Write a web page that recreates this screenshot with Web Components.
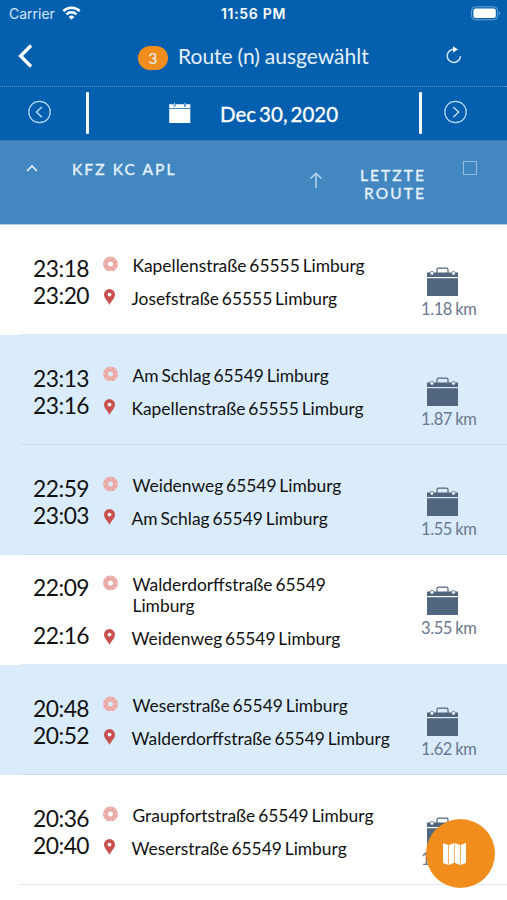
<!DOCTYPE html>
<html lang="de">
<head>
<meta charset="utf-8">
<title>Route (n) ausgewählt</title>
<style>
  body {
    margin: 0;
    background: #fff;
    font-family: Lato, "Open Sans", sans-serif;
  }
</style>
</head>
<body>
<route-app></route-app>

<script>
class StatusBar extends HTMLElement {
  constructor () {
    super()
    this.shadow = this.attachShadow({ mode: 'open' })
  }

  connectedCallback () {
    this.shadow.innerHTML =
    /*html*/`
    <style>
      :host {
        display: grid;
        grid-template-columns: 1fr auto 1fr;
        align-items: center;
        height: 28px;
        padding: 0 6px 0 9px;
        box-sizing: border-box;
        color: #fff;
        font-family: Inter, sans-serif;
        font-size: 14px;
      }
      .carrier { display: flex; align-items: center; gap: 7px; color: #d5e8f8; margin-top: -1px; }
      .carrier svg { margin-top: -1px; }
      .time { font-weight: 600; font-size: 14px; letter-spacing: 0.7px; margin-right: 3px; margin-top: -1px; }
      .battery { justify-self: end; margin-top: -2px; }
      svg { display: block; }
    </style>
    <div class="carrier">
      <span>Carrier</span>
      <svg width="19" height="14" viewBox="0 0 19 14" fill="none" stroke="#fff" stroke-width="2.5">
        <path d="M1.3 5.2a11.6 11.6 0 0 1 16.4 0M4.5 8.4a7.1 7.1 0 0 1 10 0"/>
        <path d="M9.5 13.8l-2.8-2.9a4 4 0 0 1 5.6 0z" fill="#fff" stroke="none"/>
      </svg>
    </div>
    <div class="time">11:56 PM</div>
    <svg class="battery" width="30" height="15" viewBox="0 0 30 15">
      <rect x=".6" y=".8" width="26" height="13" rx="3.8" fill="none" stroke="#6ea5d8"/>
      <rect x="2.4" y="2.6" width="22.4" height="9.4" rx="2" fill="#fff"/>
      <path d="M28 5.3q2.2 2 0 4z" fill="#6ea5d8"/>
    </svg>
    `
  }
}

class RouteHeader extends HTMLElement {
  constructor () {
    super()
    this.shadow = this.attachShadow({ mode: 'open' })
  }

  connectedCallback () {
    this.shadow.innerHTML =
    /*html*/`
    <style>
      :host {
        display: flex;
        align-items: center;
        height: 59px;
        box-sizing: border-box;
        padding: 0 43px 0 18px;
        border-bottom: 1px dotted #5c97cd;
        color: #e3f0fb;
      }
      .title { flex: 1; display: flex; align-items: center; margin-left: 105px; }
      .count {
        width: 30px;
        height: 24px;
        margin-top: 1px;
        margin-right: 10px;
        border-radius: 12px;
        background: #f08d1d;
        font-size: 16px;
        line-height: 23px;
        text-align: center;
      }
      .text { font-size: 21px; line-height: 28px; margin-top: -3px; word-spacing: -0.5px; }
      svg { display: block; }
      .back { margin-top: -2px; }
      .refresh { margin-top: -5px; }
    </style>
    <svg class="back" width="15" height="24" viewBox="0 0 15 24" fill="none" stroke="#fff" stroke-width="3.4">
      <path d="M13 1.5L2.6 12 13 22.5"/>
    </svg>
    <div class="title">
      <span class="count">${this.getAttribute('count')}</span>
      <span class="text"><slot></slot></span>
    </div>
    <svg class="refresh" width="20" height="20" viewBox="0 0 20 20" fill="none" stroke="#d5e8f8" stroke-width="1.4">
      <path d="M9.8 4.3A6.6 6.6 0 1 0 16.4 11"/>
      <path d="M9 1.2v6.4l5-3z" fill="#fff" stroke="none"/>
    </svg>
    `
  }
}

class DatePicker extends HTMLElement {
  constructor () {
    super()
    this.shadow = this.attachShadow({ mode: 'open' })
  }

  connectedCallback () {
    this.shadow.innerHTML =
    /*html*/`
    <style>
      :host {
        display: flex;
        align-items: center;
        height: 53px;
        box-sizing: border-box;
        padding: 0 39px 0 27px;
        color: #fff;
      }
      svg { display: block; }
      .bar { width: 3px; height: 42px; margin-top: -1px; border-radius: 1px; background: #f2f8fd; }
      .arrow { margin-top: -3px; }
      .day { flex: 1; display: flex; align-items: center; padding-left: 80px; }
      .day svg { margin-top: -2px; }
      .date { margin-left: 29px; margin-top: 1px; font-size: 20.5px; line-height: 26px; word-spacing: -2.2px; -webkit-text-stroke: 0.3px #fff; }
    </style>
    <svg class="arrow" width="24" height="24" viewBox="0 0 24 24" fill="none" stroke="#b9d9f2" stroke-width="1.2">
      <circle cx="12.5" cy="12" r="10.7"/><path d="M15 7l-5.5 5 5.5 5.2" stroke-width="1.5"/>
    </svg>
    <div class="bar" style="margin-left: 35px"></div>
    <div class="day">
      <svg width="22" height="22" viewBox="0 0 22 22" fill="#fff">
        <path d="M.2 2.2h4.5v2.3h1.8V2.2h8.6v2.3h1.8V2.2h4.4v4H.2z"/>
        <path d="M5 .8h1v3H5zM15.5.8h1v3h-1z" opacity=".7"/>
        <path d="M.2 7h21.1v14H.2z"/>
      </svg>
      <span class="date"><slot></slot></span>
    </div>
    <div class="bar"></div>
    <svg class="arrow" style="margin-left: 22px" width="24" height="24" viewBox="0 0 24 24" fill="none" stroke="#b9d9f2" stroke-width="1.2">
      <circle cx="11.5" cy="12" r="10.7"/><path d="M9.3 7l5.3 5-5.3 5.2" stroke-width="1.5"/>
    </svg>
    `
  }
}

class SortHeader extends HTMLElement {
  constructor () {
    super()
    this.shadow = this.attachShadow({ mode: 'open' })
  }

  connectedCallback () {
    this.shadow.innerHTML =
    /*html*/`
    <style>
      :host {
        display: flex;
        align-items: flex-start;
        height: 85px;
        box-sizing: border-box;
        padding: 20px 30px 0 26px;
        background: #4387c1;
        border-top: 1px solid #2f79b9;
        border-bottom: 1px solid #b3d0ea;
        color: #e6f2fc;
        font-size: 15.5px;
        line-height: 18px;
        letter-spacing: 2.1px;
        -webkit-text-stroke: 0.35px #e6f2fc;
      }
      svg { display: block; }
      .caret { margin-top: 3px; }
      .vehicle { flex: 1; margin: -1px 0 0 34px; }
      .up { margin: 11px 36px 0 0; }
      .last { width: 67px; margin-top: 5px; text-align: right; }
      .box { width: 12px; height: 12px; margin: 0 0 0 37px; border: 1px solid #8fbde4; }
    </style>
    <svg class="caret" width="12" height="8" viewBox="0 0 12 8" fill="none" stroke="#e6f2fc" stroke-width="1.6">
      <path d="M1 7l5-5 5 5"/>
    </svg>
    <div class="vehicle"><slot name="vehicle"></slot></div>
    <svg class="up" width="14" height="17" viewBox="0 0 14 17" fill="none" stroke="#b7d7f1" stroke-width="1.5">
      <path d="M7 16V1.5M1.6 6.5L7 1.3l5.4 5.2"/>
    </svg>
    <div class="last"><slot name="last"></slot></div>
    <div class="box"></div>
    `
  }
}

class RouteItem extends HTMLElement {
  constructor () {
    super()
    this.shadow = this.attachShadow({ mode: 'open' })
  }

  connectedCallback () {
    this.shadow.innerHTML =
    /*html*/`
    <style>
      :host {
        display: flex;
        height: 110px;
        box-sizing: border-box;
        padding: 30px 0 0 33px;
        background: linear-gradient(#e2e8ee, #e2e8ee) 20px 100% / 100% 1px no-repeat #fff;
        color: #111;
      }
      :host([selected]) {
        background-color: #daecfc;
        background-image: linear-gradient(#cbdfef, #cbdfef);
      }
      :host([wrapped]) { padding-top: 19px; }
      .times {
        width: 70px;
        display: flex;
        flex-direction: column;
        font-size: 22.8px;
        line-height: 27px;
        letter-spacing: -0.5px;
      }
      :host([wrapped]) .times { gap: 21px; }
      .stops {
        flex: 1;
        display: flex;
        flex-direction: column;
        gap: 12px;
        font-size: 17.4px;
        line-height: 21px;
        word-spacing: -1.6px;
      }
      .stop { display: flex; }
      .stop svg { flex: none; }
      .from { margin-right: 14.5px; }
      .to { margin: 1px 14.5px 0 0; }
      .last { margin-left: -1px; }
      .address { white-space: nowrap; }
      :host([wrapped]) .from-address { max-width: 210px; white-space: normal; }
      .meta { width: 92px; display: flex; flex-direction: column; padding-top: 12px; }
      .case { margin-left: 10.5px; }
      .km { margin-left: 6px; font-size: 16.5px; line-height: 20px; letter-spacing: -0.4px; word-spacing: -0.6px; color: #6a7891; margin-top: 2px; white-space: nowrap; }
      svg { display: block; }
    </style>
    <div class="times"><span>${this.getAttribute('start')}</span><span>${this.getAttribute('end')}</span></div>
    <div class="stops">
      <div class="stop">
        <svg class="from" width="15" height="16" viewBox="0 0 15 16" fill="none">
          <circle cx="7.5" cy="9" r="5" stroke="#eba9a5" stroke-width="5"/>
          <path d="M7.5 1.5v2.6M7.5 13.9v2.6M0 9h2.6M12.4 9H15M2.1 3.6l1.8 1.8M11.1 12.6l1.8 1.8M12.9 3.6l-1.8 1.8M3.9 12.6l-1.8 1.8" stroke="#f7d6d3" stroke-width=".8"/>
        </svg>
        <span class="address from-address">${this.getAttribute('from')}</span>
      </div>
      <div class="stop last">
        <svg class="to" width="15" height="16" viewBox="0 0 15 16">
          <path fill="#c8504f" d="M7.5 0A5.5 5.5 0 0 0 2 5.6c0 4 4.4 7.5 5.5 10.3 1.1-2.8 5.5-6.3 5.5-10.3A5.5 5.5 0 0 0 7.5 0z"/>
          <circle cx="7.5" cy="5.6" r="1.9" fill="#fff"/>
        </svg>
        <span class="address">${this.getAttribute('to')}</span>
      </div>
    </div>
    <div class="meta">
      <svg class="case" width="33" height="30" viewBox="0 0 33 30">
        <path d="M11 6V2.600q0-1.500 1.500-1.500h8q1.500 0 1.500 1.500V6" fill="none" stroke="#50667f" stroke-width="1.2"/>
        <path d="M1 5.500h31V10H1z" fill="#50667f"/>
        <path d="M1 11.200h31V29H1z" fill="#50667f"/>
        <circle cx="6" cy="6.300" r="1.9" fill="#fff" stroke="#50667f" stroke-width=".8"/>
        <circle cx="27.500" cy="6.300" r="1.9" fill="#fff" stroke="#50667f" stroke-width=".8"/>
      </svg>
      <span class="km">${this.getAttribute('km')} km</span>
    </div>
    `
  }
}

class MapButton extends HTMLElement {
  constructor () {
    super()
    this.shadow = this.attachShadow({ mode: 'open' })
  }

  connectedCallback () {
    this.shadow.innerHTML =
    /*html*/`
    <style>
      :host {
        position: absolute;
        right: 12px;
        bottom: 12px;
        display: flex;
        align-items: center;
        width: 69px;
        height: 69px;
        box-sizing: border-box;
        padding-left: 17px;
        border-radius: 50%;
        background: #f08d1d;
      }
      svg { display: block; }
    </style>
    <svg width="23" height="22" viewBox="0 0 23 22" fill="#fff">
      <path d="M0 0l5.3 2v20L0 20zM6 2l5.2-2v19.8L6 22zM11.8 0L17 2v20l-5.2-2.2zM17.7 2L23 0v20l-5.3 2z"/>
    </svg>
    `
  }
}

class RouteApp extends HTMLElement {
  constructor () {
    super()
    this.shadow = this.attachShadow({ mode: 'open' })
    this.routes = [
      { start: '23:18', end: '23:20', from: 'Kapellenstraße 65555 Limburg', to: 'Josefstraße 65555 Limburg', km: '1.18' },
      { start: '23:13', end: '23:16', from: 'Am Schlag 65549 Limburg', to: 'Kapellenstraße 65555 Limburg', km: '1.87', flags: 'selected' },
      { start: '22:59', end: '23:03', from: 'Weidenweg 65549 Limburg', to: 'Am Schlag 65549 Limburg', km: '1.55', flags: 'selected' },
      { start: '22:09', end: '22:16', from: 'Walderdorffstraße 65549 Limburg', to: 'Weidenweg 65549 Limburg', km: '3.55', flags: 'wrapped' },
      { start: '20:48', end: '20:52', from: 'Weserstraße 65549 Limburg', to: 'Walderdorffstraße 65549 Limburg', km: '1.62', flags: 'selected' },
      { start: '20:36', end: '20:40', from: 'Graupfortstraße 65549 Limburg', to: 'Weserstraße 65549 Limburg', km: '1.94' }
    ]
  }

  connectedCallback () {
    this.render()
  }

  render () {
    this.shadow.innerHTML =
    /*html*/`
    <style>
      :host {
        display: block;
        position: relative;
        width: 507px;
        height: 900px;
        overflow: hidden;
        background: #fff;
      }
      .top { background: #0460ae; }
    </style>
    <div class="top">
      <status-bar></status-bar>
      <route-header count="3">Route (n) ausgewählt</route-header>
      <date-picker>Dec 30, 2020</date-picker>
    </div>
    <sort-header>
      <span slot="vehicle">KFZ KC APL</span>
      <span slot="last">LETZTE ROUTE</span>
    </sort-header>
    <div class="list">
      ${this.routes.map(route => `
        <route-item ${route.flags || ''} start="${route.start}" end="${route.end}" from="${route.from}" to="${route.to}" km="${route.km}"></route-item>
      `).join('')}
    </div>
    <map-button></map-button>
    `
  }
}

customElements.define('status-bar', StatusBar);
customElements.define('route-header', RouteHeader);
customElements.define('date-picker', DatePicker);
customElements.define('sort-header', SortHeader);
customElements.define('route-item', RouteItem);
customElements.define('map-button', MapButton);
customElements.define('route-app', RouteApp);
</script>
</body>
</html>
